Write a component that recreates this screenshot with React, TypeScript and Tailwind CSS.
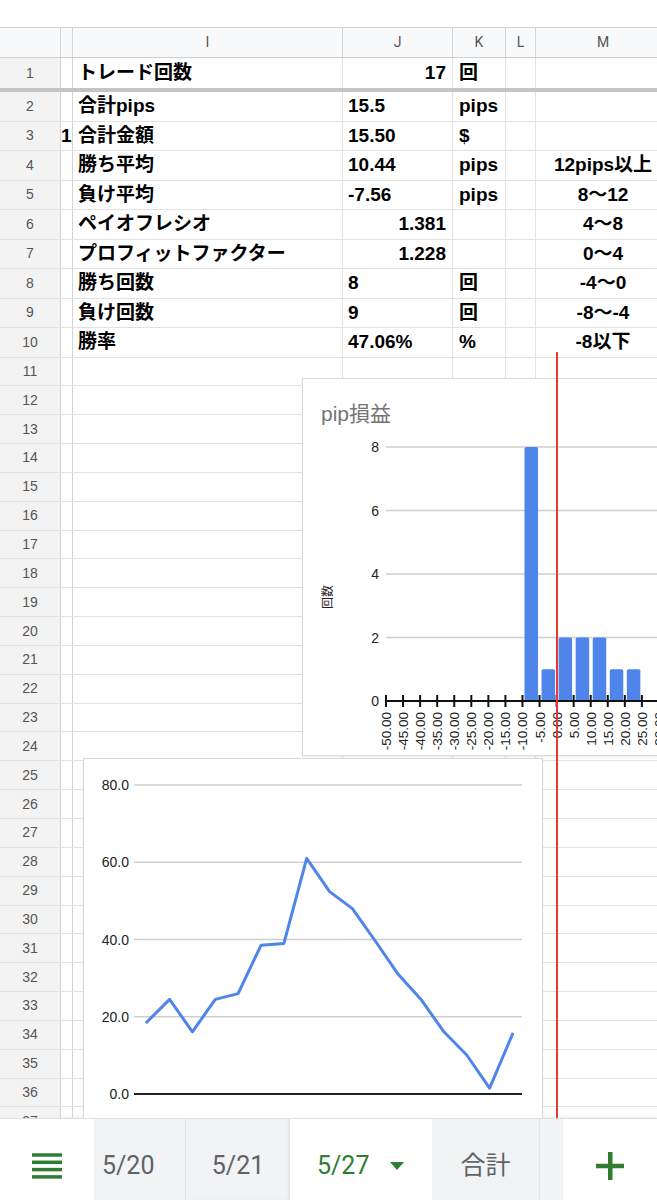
import React from 'react';

const CELL_FONT = { fontFamily: '"Liberation Sans", "Noto Sans CJK JP", sans-serif' };

type Row = {
  n: number;
  h?: string;
  i?: string;
  j?: string;
  jr?: boolean;
  k?: string;
  m?: string;
};

const dataRows: Row[] = [
  { n: 2, i: '合計pips', j: '15.5', k: 'pips' },
  { n: 3, h: '1', i: '合計金額', j: '15.50', k: '$' },
  { n: 4, i: '勝ち平均', j: '10.44', k: 'pips', m: '12pips以上' },
  { n: 5, i: '負け平均', j: '-7.56', k: 'pips', m: '8〜12' },
  { n: 6, i: 'ペイオフレシオ', j: '1.381', jr: true, m: '4〜8' },
  { n: 7, i: 'プロフィットファクター', j: '1.228', jr: true, m: '0〜4' },
  { n: 8, i: '勝ち回数', j: '8', k: '回', m: '-4〜0' },
  { n: 9, i: '負け回数', j: '9', k: '回', m: '-8〜-4' },
  { n: 10, i: '勝率', j: '47.06%', k: '%', m: '-8以下' },
];

const emptyRows: Row[] = Array.from({ length: 27 }, (_, idx) => ({ n: idx + 11 }));

function SheetRow({ row, kind }: { row: Row; kind: 'first' | 'data' | 'empty' }) {
  const rowCls =
    kind === 'first'
      ? 'flex h-[34px] shrink-0 border-b-4 border-[#c4c4c4]'
      : kind === 'data'
        ? 'flex h-[29.5px] shrink-0 border-b border-[#e2e2e2]'
        : 'flex h-[28.85px] shrink-0 border-b border-[#e2e2e2]';
  return (
    <div className={rowCls}>
      <div className="flex w-[61px] shrink-0 items-center justify-center border-r border-[#d4d4d4] bg-[#f3f3f3] text-[14px] text-[#555]">
        {row.n}
      </div>
      <div className="flex w-[12px] shrink-0 items-center overflow-hidden border-r border-[#d4d4d4] text-[19px] font-bold text-black">
        {row.h}
      </div>
      <div className="flex w-[270px] shrink-0 items-center border-r border-[#e2e2e2] pl-[5px] text-[19px] font-bold text-black">
        {row.i}
      </div>
      <div
        className={
          'flex w-[110px] shrink-0 items-center border-r border-[#e2e2e2] text-[19px] font-bold text-black ' +
          (row.jr ? 'justify-end pr-[6px]' : 'pl-[5px]')
        }
      >
        {row.j}
      </div>
      <div className="flex w-[53px] shrink-0 items-center border-r border-[#e2e2e2] pl-[6px] text-[19px] font-bold text-black">
        {row.k}
      </div>
      <div className="w-[30px] shrink-0 border-r border-[#e2e2e2]" />
      <div className="flex w-[134px] shrink-0 items-center justify-center text-[19px] font-bold text-black">
        {row.m}
      </div>
    </div>
  );
}

function Histogram() {
  const unit = 31.75;
  const base = 322;
  const tickStep = 17.06;
  const bins: Record<number, number> = { 8: 8, 9: 1, 10: 2, 11: 2, 12: 2, 13: 1, 14: 1 };
  return (
    <svg width="400" height="378" className="block" style={{ fontFamily: '"Liberation Sans", "Noto Sans CJK JP", sans-serif' }}>
      <text x="18" y="42" fontSize="21" fill="#757575">
        pip損益
      </text>
      {[2, 4, 6, 8].map((v) => (
        <line key={v} x1="83" x2="400" y1={base - v * unit} y2={base - v * unit} stroke="#cfcfcf" strokeWidth="1.5" />
      ))}
      {[0, 2, 4, 6, 8].map((v) => (
        <text key={v} x="76" y={base - v * unit + 5} fontSize="14" fill="#222" textAnchor="end">
          {v}
        </text>
      ))}
      <text x="29" y="218" fontSize="12" fill="#222" textAnchor="middle" transform="rotate(-90 29 218)">
        回数
      </text>
      {Object.entries(bins).map(([b, v]) => {
        const x = 83 + Number(b) * tickStep + 2;
        return <rect key={b} x={x} y={base - v * unit} width="13.5" height={v * unit} rx="1.5" fill="#4f84ea" />;
      })}
      <line x1="83" x2="400" y1={base} y2={base} stroke="#111" strokeWidth="2" />
      {Array.from({ length: 17 }, (_, i) => {
        const x = 83 + i * tickStep;
        return <line key={i} x1={x} x2={x} y1={base - 6} y2={base + 6} stroke="#111" strokeWidth="2" />;
      })}
      {Array.from({ length: 17 }, (_, i) => {
        const x = 83 + i * tickStep + 5;
        const y = 333;
        return (
          <text key={i} x={x} y={y} fontSize="13.5" fill="#222" textAnchor="end" transform={`rotate(-90 ${x} ${y})`}>
            {(-50 + i * 5).toFixed(2)}
          </text>
        );
      })}
    </svg>
  );
}

function LineChart() {
  const values = [18.6, 24.5, 16.1, 24.5, 26, 38.5, 39, 61, 52.4, 48, 39.6, 31, 24.5, 16.1, 10.1, 1.5, 15.5];
  const base = 335;
  const unit = 3.8625;
  const pts = values.map((v, k) => `${(62.7 + k * 22.86).toFixed(1)},${(base - v * unit).toFixed(1)}`).join(' ');
  return (
    <svg width="460" height="400" className="block" style={{ fontFamily: '"Liberation Sans", sans-serif' }}>
      {[20, 40, 60, 80].map((v) => (
        <line key={v} x1="50" x2="438" y1={base - v * unit} y2={base - v * unit} stroke="#cfcfcf" strokeWidth="1.5" />
      ))}
      <line x1="50" x2="438" y1={base} y2={base} stroke="#222" strokeWidth="1.8" />
      {[0, 20, 40, 60, 80].map((v) => (
        <text key={v} x="45" y={base - v * unit + 5} fontSize="14" fill="#222" textAnchor="end">
          {v.toFixed(1)}
        </text>
      ))}
      <polyline points={pts} fill="none" stroke="#4f84ea" strokeWidth="3" strokeLinejoin="round" strokeLinecap="round" />
    </svg>
  );
}

function TabBar() {
  return (
    <div
      className="flex h-[82px] shrink-0 border-t border-[#e0e0e0] bg-white shadow-[0_-1px_3px_rgba(0,0,0,0.08)]"
      style={{ fontFamily: 'Roboto, "Noto Sans CJK JP", sans-serif' }}
    >
      <div className="flex w-[94px] shrink-0 items-center justify-center pt-[12px]">
        <svg width="30" height="26" viewBox="0 0 30 26">
          {[2, 9.3, 16.6, 23.9].map((y) => (
            <rect key={y} x="0" y={y - 1.75} width="30" height="3.5" fill="#2e7d32" />
          ))}
        </svg>
      </div>
      <div className="flex w-[91px] shrink-0 items-center bg-[#f1f3f4] pl-[8px] pt-[12px] text-[25px] text-[#5f6368]">5/20</div>
      <div className="flex w-[105px] shrink-0 items-center justify-center border-l border-[#e3e4e6] bg-[#f1f3f4] pt-[12px] text-[25px] text-[#5f6368] shadow-[inset_-2px_0_2px_rgba(0,0,0,0.06)]">
        5/21
      </div>
      <div className="flex w-[142px] shrink-0 items-center gap-[21px] bg-white pl-[27px] pt-[12px] text-[25px] text-[#2e7d32]">
        <span>5/27</span>
        <svg width="14" height="8" viewBox="0 0 14 8">
          <path d="M0 0 L14 0 L7 8 Z" fill="#2e7d32" />
        </svg>
      </div>
      <div className="flex w-[107px] shrink-0 items-center justify-center bg-[#f1f3f4] pt-[12px] text-[25px] text-[#5f6368]">合計</div>
      <div className="w-[24px] shrink-0 border-l border-[#e3e4e6] bg-[#f1f3f4]" />
      <div className="flex flex-1 items-center justify-center pt-[12px]">
        <svg width="28" height="28" viewBox="0 0 28 28">
          <rect x="12" y="0" width="4.5" height="28" fill="#2e7d32" />
          <rect x="0" y="11.75" width="28" height="4.5" fill="#2e7d32" />
        </svg>
      </div>
    </div>
  );
}

export default function App() {
  return (
    <div className="flex h-[1200px] w-full flex-col overflow-hidden bg-white" style={CELL_FONT}>
      <div className="relative flex-1 overflow-hidden">
        <div className="h-[27px]" />
        <div
          className="flex h-[31px] border-y border-[#cfcfcf] bg-[#f8f9fa] text-[14px] text-[#555]"
          style={{ fontFamily: 'Roboto, "Liberation Sans", sans-serif' }}
        >
          <div className="w-[61px] shrink-0 border-r border-[#d4d4d4]" />
          <div className="w-[12px] shrink-0 border-r border-[#d4d4d4]" />
          <div className="flex w-[270px] shrink-0 items-center justify-center border-r border-[#d4d4d4]">I</div>
          <div className="flex w-[110px] shrink-0 items-center justify-center border-r border-[#d4d4d4]">J</div>
          <div className="flex w-[53px] shrink-0 items-center justify-center border-r border-[#d4d4d4]">K</div>
          <div className="flex w-[30px] shrink-0 items-center justify-center border-r border-[#d4d4d4]">L</div>
          <div className="flex w-[134px] shrink-0 items-center justify-center">M</div>
        </div>
        <SheetRow kind="first" row={{ n: 1, i: 'トレード回数', j: '17', jr: true, k: '回' }} />
        {dataRows.map((r) => (
          <SheetRow key={r.n} kind="data" row={r} />
        ))}
        {emptyRows.map((r) => (
          <SheetRow key={r.n} kind="empty" row={r} />
        ))}

        <div className="absolute left-[302px] top-[378px] h-[378px] w-[400px] border border-[#d9d9d9] bg-white shadow-[0_1px_2px_rgba(0,0,0,0.08)]">
          <Histogram />
        </div>
        <div className="absolute left-[83px] top-[758px] h-[400px] w-[460px] border border-[#d9d9d9] bg-white shadow-[0_1px_2px_rgba(0,0,0,0.08)]">
          <LineChart />
        </div>
        <div className="absolute left-[556px] top-[352px] h-[800px] w-[2px] bg-[#e53935]" />
      </div>
      <TabBar />
    </div>
  );
}
